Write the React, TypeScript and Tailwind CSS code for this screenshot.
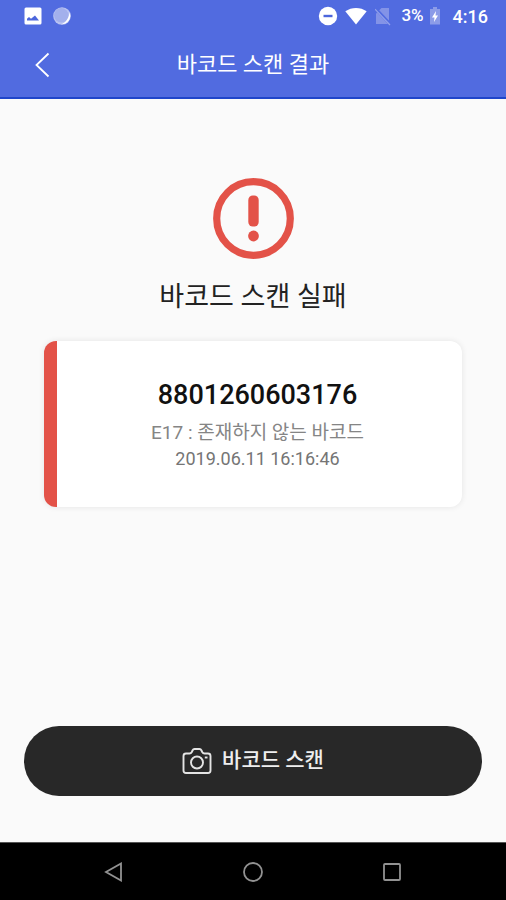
const KOREAN_FONT = 'font-[Roboto,"Noto_Sans_CJK_KR",sans-serif]';

const scan = {
  barcode: '8801260603176',
  message: 'E17 : 존재하지 않는 바코드',
  scannedAt: '2019.06.11 16:16:46',
};

const StatusBar = () => (
  <div className="flex h-8 items-center justify-between pr-[18px] pl-6 text-white">
    <div className="flex items-center gap-[10px]">
      <svg className="h-5 w-[18px]" viewBox="0 0 18 20" fill="none">
        <rect x="0.5" y="1.5" width="17" height="17" rx="1.5" fill="#fff" />
        <path d="M3 14.5v-1.8l2-1.7 2 1.7L11 9.5l4 5z" fill="#4c66dc" />
      </svg>
      <svg className="h-5 w-5" viewBox="0 0 20 20" fill="none">
        <circle cx="10" cy="10" r="8.8" fill="#b9c3f2" />
        <circle cx="9.3" cy="9.3" r="7.2" fill="#a3b0ec" />
        <path d="M17.6 6.5A8.5 8.5 0 0 1 9 18.3C13.5 17 16.6 13 17.6 6.5z" fill="#fff" />
      </svg>
    </div>
    <div className="flex items-center">
      <svg className="h-5 w-5" viewBox="0 0 20 20">
        <circle cx="10" cy="10" r="9.2" fill="#fff" />
        <path d="M5.5 8.8h9v2.4h-9z" fill="#4c66dc" />
      </svg>
      <svg className="ml-[7px] h-5 w-[22px]" viewBox="0 0 22 20">
        <path d="M0.3 5.3C6.5 0.8 15.5 0.8 21.7 5.3L11 18.5z" fill="#fff" />
      </svg>
      <svg className="ml-2 h-5 w-4" viewBox="0 0 16 20">
        <path d="M1 7.5L6.5 2H14v16H1z" fill="#8393e7" />
        <path d="M0.5 2.5L15.5 18.5" stroke="#516be0" strokeWidth="3" />
        <path d="M0 3.2L15 19" stroke="#93a1ea" strokeWidth="1.2" />
      </svg>
      <span className="ml-[10px] text-[17px] font-medium">3%</span>
      <svg className="ml-[5px] h-5 w-3" viewBox="0 0 12 20">
        <path d="M4 1h4v2h3v15.500H1V3h3z" fill="#8b9be8" />
        <path d="M7 5L3 11.500h2.500L5 16l4-6.500H6.500z" fill="#fff" />
      </svg>
      <span className="ml-3 text-[18px] font-medium">4:16</span>
    </div>
  </div>
);

const AppHeader = () => (
  <header className="border-b-2 border-[#1f45ca] bg-[#516be0]">
    <StatusBar />
    <div className="grid h-[65px] grid-cols-[84px_1fr_84px] items-center">
      <button type="button" aria-label="뒤로" className="flex h-full items-center justify-center">
        <svg className="h-7 w-4" viewBox="0 0 16 28" fill="none" stroke="#fff" strokeWidth="1.8">
          <path d="M14.5 2.5L2.5 14l12 11.500" />
        </svg>
      </button>
      <h1 className="text-center text-[22px] text-white">바코드 스캔 결과</h1>
    </div>
  </header>
);

const FailureIcon = () => (
  <svg className="h-[81px] w-[81px]" viewBox="0 0 81 81" fill="none">
    <circle cx="40.5" cy="40.5" r="36.8" stroke="#e35248" strokeWidth="7.2" />
    <rect x="35.3" y="17.5" width="10.4" height="31" rx="4.5" fill="#e35248" />
    <circle cx="40.5" cy="58" r="5.4" fill="#e35248" />
  </svg>
);

const ResultCard = () => (
  <section className="w-full rounded-xl border-l-[13px] border-[#e35248] bg-white pt-9 pr-4 pb-[35px] pl-3 text-center shadow-[0_0_6px_rgba(0,0,0,0.09)]">
    <p className="text-[27px] leading-9 font-medium text-[#111]">{scan.barcode}</p>
    <p className="mt-[6px] text-[19px] leading-[27px] text-[#858585]">{scan.message}</p>
    <p className="text-[18px] leading-[26px] text-[#757575]">{scan.scannedAt}</p>
  </section>
);

const CameraIcon = () => (
  <svg className="h-7 w-[30px]" viewBox="0 0 30 28" fill="none" stroke="#e4e4e4" strokeWidth="1.9" strokeLinejoin="round">
    <path d="M4 6.5h3.500Q9 6.500 9.800 5L10.500 3.500Q11.200 2 12.500 2h5Q18.800 2 19.500 3.500L20.200 5Q21 6.500 22.500 6.500H26Q28.500 6.500 28.500 9v14.500Q28.500 26 26 26H4Q1.500 26 1.500 23.500V9Q1.500 6.500 4 6.500z" />
    <circle cx="15" cy="15.5" r="6" />
    <path d="M22.800 10.500h2.700" />
  </svg>
);

const NavigationBar = () => (
  <nav className="flex h-[58px] items-center justify-around border-t border-[#555] bg-black px-11 text-[#929292]">
    <button type="button" aria-label="이전">
      <svg className="h-5 w-5" viewBox="0 0 20 20" fill="none" stroke="currentColor" strokeWidth="1.8">
        <path d="M17 1.500v17L2 10z" />
      </svg>
    </button>
    <button type="button" aria-label="홈">
      <svg className="h-5 w-5" viewBox="0 0 20 20" fill="none" stroke="currentColor" strokeWidth="1.8">
        <circle cx="10" cy="10" r="9" />
      </svg>
    </button>
    <button type="button" aria-label="최근 앱">
      <svg className="h-5 w-5" viewBox="0 0 20 20" fill="none" stroke="currentColor" strokeWidth="1.8">
        <rect x="2" y="2" width="16" height="16" rx="1" />
      </svg>
    </button>
  </nav>
);

export default function App() {
  return (
    <div className={`flex min-h-screen flex-col bg-[#fafafa] ${KOREAN_FONT}`}>
      <AppHeader />
      <main className="flex flex-1 flex-col">
        <div className="flex flex-1 flex-col items-center px-11 pt-[79px]">
          <FailureIcon />
          <h2 className="mt-5 mb-[26px] text-[27px] leading-9 text-[#222]">바코드 스캔 실패</h2>
          <ResultCard />
        </div>
        <div className="px-6 pb-[46px]">
          <button
            type="button"
            className="flex h-[70px] w-full items-center justify-center gap-[10px] rounded-full bg-[#282828] text-[21px] font-medium text-[#eee]"
          >
            <CameraIcon />
            바코드 스캔
          </button>
        </div>
      </main>
      <NavigationBar />
    </div>
  );
}
